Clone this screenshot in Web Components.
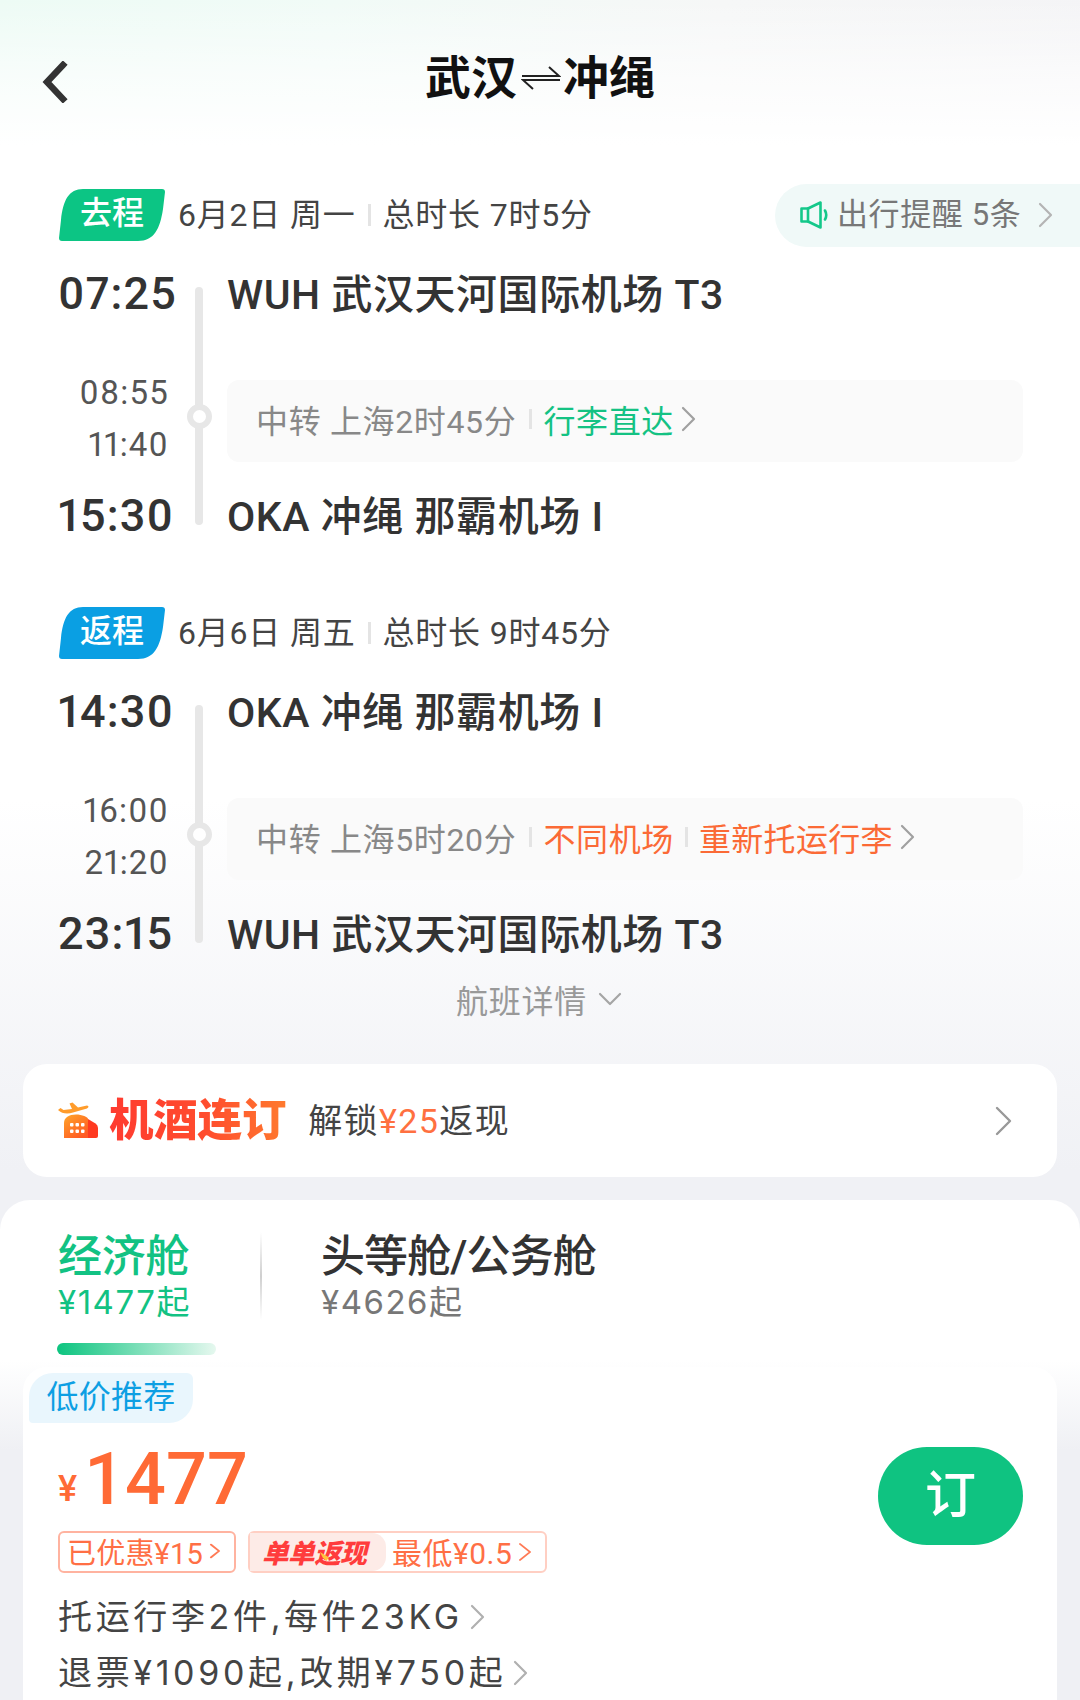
<!DOCTYPE html>
<html lang="zh-CN"><head><meta charset="utf-8"><title>武汉冲绳</title>
<style>
html,body{margin:0;padding:0;background:#fff}
body{width:1080px;height:1700px;overflow:hidden;font-family:Roboto,"Noto Sans CJK SC",sans-serif}
</style></head><body>
<trip-page>
  <trip-header slot="header"></trip-header>
  <flight-leg kind="go" label="去程" date="6月2日 周一" total="总时长 7时5分" dep="07:25" dep-airport="WUH 武汉天河国际机场 T3" t1="08:55" t2="11:40" arr="15:30" arr-airport="OKA 冲绳 那霸机场 I" reminder>
    <span>中转 上海2时45分</span><i-sep></i-sep><span style="color:#14c283">行李直达</span><i-chev size="13" color="#a0a0a0" style="margin-left:7px"></i-chev>
  </flight-leg>
  <flight-leg kind="back" label="返程" date="6月6日 周五" total="总时长 9时45分" dep="14:30" dep-airport="OKA 冲绳 那霸机场 I" t1="16:00" t2="21:20" arr="23:15" arr-airport="WUH 武汉天河国际机场 T3">
    <span>中转 上海5时20分</span><i-sep></i-sep><span style="color:#fb6a36;margin-right:-2px">不同机场</span><i-sep></i-sep><span style="color:#fb6a36;letter-spacing:.3px">重新托运行李</span><i-chev size="13" color="#a0a0a0" style="margin-left:7px"></i-chev>
  </flight-leg>
  <flight-more></flight-more>
  <hotel-card></hotel-card>
  <cabin-sheet>
    <price-card></price-card>
  </cabin-sheet>
</trip-page>
<script>
function def(name, css, html){
  customElements.define(name, class extends HTMLElement{
    connectedCallback(){
      if(this.shadowRoot) return;
      const r=this.attachShadow({mode:'open'});
      const a=n=>this.getAttribute(n)||'';
      r.innerHTML='<style>'+css+'</style>'+(typeof html==='function'?html(a,this):html);
    }
  });
}
def('i-chev',':host{display:inline-flex;align-items:center;flex:none}svg{display:block}',(a)=>{
  const s=+a('size')||14,h=Math.round(s*2),c=a('color')||'#aaa',w=a('weight')||2.2;
  return `<svg width="${s+2}" height="${h}" viewBox="0 0 ${s+2} ${h}" fill="none"><path d="M2 2 L${s} ${h/2} L2 ${h-2}" stroke="${c}" stroke-width="${w}" stroke-linecap="round" stroke-linejoin="round"/></svg>`;
});
def('i-sep',':host{display:inline-block;width:3px;height:20px;background:#e4e4e4;margin:0 11px 0 13px;flex:none}','');

def('trip-page',`
:host{display:block;width:1080px;height:1700px;overflow:hidden;
background:linear-gradient(180deg,#fff 800px,#f0f1f5 1170px,#f0f1f5 100%);
}
`,`<slot name="header"></slot><slot></slot>`);

def('trip-header',`
:host{display:grid;grid-template-columns:1fr auto 1fr;align-items:start;height:189px;box-sizing:border-box;padding:54px 0 0 41px;color:#111;
background:linear-gradient(180deg,rgba(255,255,255,0) 0,rgba(255,255,255,.6) 75px,#fff 145px),linear-gradient(100deg,#edfbf5 0,#f1fbf7 30%,#f6f7f7 65%,#f4f4f6 100%)}
.back{margin-top:7px;display:block}
.title{display:flex;align-items:center;font-size:46px;font-weight:700;line-height:48px;color:#111;margin-left:-41px}
.title svg{margin:0 2px 0 4px;display:block}
`,`<svg class="back" width="28" height="42" viewBox="0 0 28 42" fill="none"><path d="M22 4 L6 21 L22 38" stroke="#333" stroke-width="6.500" stroke-linecap="square" stroke-linejoin="miter"/></svg>
<div class="title"><span>武汉</span><svg width="40" height="24" viewBox="0 0 40 24" fill="none"><path d="M1 10H38L28 1M39 14H2L12 23" stroke="#222" stroke-width="2"/></svg><span>冲绳</span></div><span></span>`);

def('leg-tag',`
:host{display:inline-grid;width:106px;height:52px;flex:none;place-items:center;position:relative;color:#fff;font-size:32px;font-weight:500;line-height:46px;letter-spacing:0}
svg{position:absolute;left:0;top:0}
span{position:relative;margin-top:-5px}
`,(a)=>`<svg width="106" height="52" viewBox="0 0 106 52"><path fill="${a('color')}" d="M3 52Q0 52 0 49L2 31C4 11 10 0 24 0H103Q106 0 106 3L104 20C101 40 95 52 79 52Z"/></svg><span>${a('text')}</span>`);

def('flight-leg',`
:host{display:block;box-sizing:border-box;padding-left:58px;color:#333}
:host([kind=back]){margin-top:61px}
.head{display:flex;align-items:center;height:52px;padding-left:1px;font-size:32px;letter-spacing:.8px;color:#444;line-height:52px}
.head .d{margin-left:13px;white-space:pre}
.head .sep{width:3px;height:22px;background:#e4e4e4;margin:0 12px 0 12px}
.pill{margin-left:auto;height:63px;width:305px;box-sizing:border-box;border-radius:32px 0 0 32px;background:#f0f9f8;display:flex;align-items:center;padding-left:25px;color:#777;letter-spacing:0.6px;font-size:31px}
.pill svg{margin-right:9px;display:block}
.pill i-chev{margin-left:17px}
.grid{display:grid;grid-template-columns:137px 8px 1fr;grid-template-rows:62px 42px 104px 14px 62px;margin-top:21px}
.time{grid-column:1;font-size:45px;font-weight:500;line-height:62px;letter-spacing:1.2px;color:#333;margin-top:1px;font-variant-numeric:proportional-nums}
.air{grid-column:3;margin:2px 0 0 24px;font-size:41px;font-weight:500;line-height:62px;letter-spacing:.55px;color:#333;white-space:nowrap}
.bar{grid-column:2;grid-row:1/6;background:#e7e7e7;border-radius:4px;margin:25px 0 21px;position:relative}
.ring{position:absolute;left:-8.5px;top:117px;width:25px;height:25px;box-sizing:border-box;border:6px solid #e7e7e7;border-radius:50%;background:#fff}
.mid{grid-column:1;grid-row:3;font-size:33px;line-height:52px;color:#555;text-align:right;padding-right:26px;letter-spacing:1.2px;margin-top:1px;font-variant-numeric:proportional-nums}
.box{grid-column:3;grid-row:3;margin:14px 57px 8px 24px;background:#fafafa;border-radius:12px;display:flex;align-items:center;padding:0 0 5px 29px;box-sizing:border-box;font-size:32px;letter-spacing:.65px;color:#888;white-space:nowrap}
.r1{grid-row:1}.r3{grid-row:5}
`,(a,el)=>`
<div class="head"><leg-tag text="${a('label')}" color="${a('kind')==='go'?'#0cc584':'#0a9fe3'}"></leg-tag>
<span class="d">${a('date')}</span><span class="sep"></span><span>${a('total')}</span>
${el.hasAttribute('reminder')?`<div class="pill"><svg width="28" height="28" viewBox="0 0 28 28" fill="none" stroke="#14c88a" stroke-width="2.600" stroke-linejoin="round" stroke-linecap="round"><path d="M1.500 7.500H8L20.500 1.500V26.500L8 20.500H1.500Z"/><path d="M8 7.500V20.500"/><path d="M25 9.500Q27.500 14 25 18.500"/></svg><span>出行提醒 5条</span><i-chev size="13" color="#b4b4b4"></i-chev></div>`:''}</div>
<div class="grid">
<div class="time r1">${a('dep')}</div><div class="air r1">${a('dep-airport')}</div>
<div class="bar"><div class="ring"></div></div>
<div class="mid">${a('t1')}<br>${a('t2')}</div>
<div class="box"><slot></slot></div>
<div class="time r3">${a('arr')}</div><div class="air r3">${a('arr-airport')}</div>
</div>`);

def('flight-more',`
:host{display:flex;justify-content:center;align-items:center;height:40px;margin-top:15px;font-size:32px;letter-spacing:.7px;color:#999;padding-right:2px}
svg{margin-left:11px;display:block}
`,`<span>航班详情</span><svg width="24" height="14" viewBox="0 0 24 14" fill="none"><path d="M2 2L12 12L22 2" stroke="#a5a5a5" stroke-width="2.200" stroke-linecap="round" stroke-linejoin="round"/></svg>`);

def('hotel-card',`
:host{display:flex;align-items:center;margin:45px 23px 0;height:113px;background:#fff;border-radius:24px;padding:0 45px 0 34px;box-sizing:border-box;color:#444}
svg.logo{display:block;margin-right:10px;flex:none}
.name{font-size:44.500px;font-weight:900;line-height:50px;letter-spacing:-.2px;background:linear-gradient(90deg,#ff3b30 0,#ff4d2e 55%,#ff7a2e 100%);-webkit-background-clip:text;background-clip:text;color:transparent}
.txt{margin-left:22px;padding-bottom:4px;font-size:34px;letter-spacing:1.400px;color:#444}
.txt b{font-weight:400;color:#ff7040}
i-chev{margin-left:auto}
`,`<svg class="logo" width="42" height="38" viewBox="0 0 42 38">
<defs><linearGradient id="g1" x1="0" y1="0" x2="0.700" y2="1"><stop offset="0" stop-color="#ffa629"/><stop offset="1" stop-color="#ff5a24"/></linearGradient></defs>
<path fill="#ff9c2b" d="M1 8C5 12 11 12 16 10.500L30 6.500Q33 4.500 30 3.500L21 5.500L15.500 .5L12.500 1.500L15 7L6.500 8L3.500 6Z"/>
<path fill="url(#g1)" d="M7 36V21C7 15.500 12 12.500 19 12.500C25 12.500 31 15 31 17V36Z"/>
<path fill="#ff3a20" d="M31 17L38.500 21.500Q41 23 41 26V34Q41 36 39 36H31Z"/>
<g fill="#fff"><rect x="13" y="21" width="3.500" height="3.500" rx="1"/><rect x="18.500" y="21" width="3.500" height="3.500" rx="1"/><rect x="24" y="21" width="3.500" height="3.500" rx="1"/><rect x="13" y="27.500" width="3.500" height="3.500" rx="1"/><rect x="18.500" y="27.500" width="3.500" height="3.500" rx="1"/><rect x="24" y="27.500" width="3.500" height="3.500" rx="1"/></g></svg>
<span class="name">机酒连订</span><span class="txt">解锁<b>¥25</b>返现</span><i-chev size="15" color="#999" weight="2.400"></i-chev>`);

def('cabin-sheet',`
:host{display:block;margin-top:23px;height:500px;border-radius:30px 30px 0 0;background:linear-gradient(180deg,#fff 0,#fff 160px,#eff0f4 250px)}
.tabs{display:flex;padding:32px 0 0 58px;height:137px;box-sizing:border-box;position:relative}
.t{display:flex;flex-direction:column}
.n{font-size:44px;font-weight:500;line-height:50px;color:#333;white-space:nowrap;letter-spacing:-.9px}
.p{font-family:Inter,"Noto Sans CJK SC",sans-serif;font-size:33px;line-height:40px;margin-top:0;color:#777;letter-spacing:1.500px}
.on{width:202px}.on .n,.on .p{color:#12c283}
.on .n{letter-spacing:-.3px}
.div{width:2px;height:88px;background:linear-gradient(180deg,rgba(205,205,205,0),#cfcfcf 50%,rgba(205,205,205,0));margin-right:59px}
.ind{position:absolute;left:57px;top:143px;width:159px;height:12px;border-radius:6px;background:linear-gradient(90deg,#0cc47f,#e6f8ef)}
`,`<div class="tabs"><div class="t on"><span class="n">经济舱</span><span class="p">¥1477起</span></div><div class="div"></div><div class="t"><span class="n">头等舱/公务舱</span><span class="p">¥4626起</span></div><div class="ind"></div></div><slot></slot>`);

def('price-card',`
:host{display:block;margin:30px 23px 0;background:#fff;border-radius:24px 24px 0 0;height:340px;position:relative;padding:6px 0 0 6px;box-sizing:border-box;color:#444}
.tag{display:inline-block;width:164px;height:50px;background:#e9f6fd;border-radius:24px 6px 24px 4px;color:#0d9fe3;font-size:32px;line-height:48px;text-align:center;letter-spacing:.3px;vertical-align:top}
.body{display:flex;margin-top:20px;padding:0 34px 0 29px}
.left{flex:1;min-width:0}
.price{color:#ff6a35;font-weight:500;height:70px;line-height:70px;font-size:72px;white-space:nowrap;padding-top:2px;margin-bottom:-2px}
.price small{font-size:36px;font-weight:500;margin-right:7px;position:relative;top:-3px}
.badges{display:flex;margin-top:19px;gap:12px}
.b{display:flex;align-items:center;height:42px;margin-top:-1px;box-sizing:border-box;border:2.500px solid #ffb3a0;border-radius:6px;color:#ff6f45;font-size:29px;white-space:nowrap;letter-spacing:.2px;padding-bottom:3px}
.b1{width:178px;padding-left:7px}
.b2{width:299px;border-color:#ffcfc3;padding-bottom:0}
.lab{width:136px;align-self:stretch;background:#fdebe7;border-radius:0 14px 14px 0;display:flex;align-items:center;padding:0 0 2px 12px;box-sizing:border-box;color:#ff3c3c;font-size:26.500px;font-weight:900;font-style:italic;letter-spacing:-.4px;flex:none;position:relative}
.lab::after{content:"";position:absolute;left:70px;top:19px;width:9px;height:9px;background:#ffc53d;clip-path:polygon(0 0,100% 60%,70% 100%,30% 60%)}
.val{margin-left:6px;font-size:30px;padding-bottom:3px;letter-spacing:.5px}
.b i-chev{margin-left:6px}
.line{display:flex;align-items:center;font-family:Inter,"Noto Sans CJK SC",sans-serif;font-size:34px;line-height:56px;letter-spacing:3.650px;color:#444;white-space:nowrap}
.lines{margin-top:16px}
.line i-chev{margin-left:7px}
.btn{flex:none;width:145px;height:98px;margin-top:4px;border-radius:49px;background:#0fc381;color:#fff;font-size:51px;font-weight:500;display:grid;place-items:center;padding-bottom:10px;box-sizing:border-box}
`,`<span class="tag">低价推荐</span>
<div class="body"><div class="left">
<div class="price"><small>¥</small>1477</div>
<div class="badges"><div class="b b1"><span>已优惠¥15</span><i-chev size="10" color="#ff7a55" style="transform:scale(1,.8)"></i-chev></div>
<div class="b b2"><span class="lab">单单返现</span><span class="val">最低¥0.5</span><i-chev size="12" color="#ff7a55" style="transform:scale(1,.8)"></i-chev></div></div>
<div class="lines"><div class="line"><span>托运行李2件,每件23KG</span><i-chev size="13" color="#b0b0b0"></i-chev></div>
<div class="line"><span>退票¥1090起,改期¥750起</span><i-chev size="13" color="#b0b0b0"></i-chev></div></div>
</div><div class="btn">订</div></div>`);
</script>
</body></html>
